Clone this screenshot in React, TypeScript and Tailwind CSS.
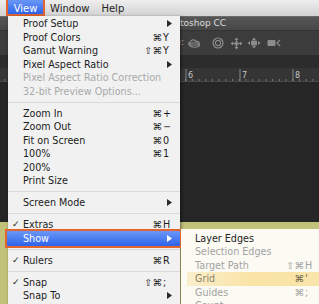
import React from "react";

type Item =
  | {
      label: string;
      disabled?: boolean;
      check?: boolean;
      mods?: string;
      k?: string;
      arrow?: boolean;
      sel?: boolean;
    }
  | "sep";

const items: Item[] = [
  { label: "Proof Setup", arrow: true },
  { label: "Proof Colors", mods: "⌘", k: "Y" },
  { label: "Gamut Warning", mods: "⇧⌘", k: "Y" },
  { label: "Pixel Aspect Ratio", arrow: true },
  { label: "Pixel Aspect Ratio Correction", disabled: true },
  { label: "32-bit Preview Options...", disabled: true },
  "sep",
  { label: "Zoom In", mods: "⌘", k: "+" },
  { label: "Zoom Out", mods: "⌘", k: "−" },
  { label: "Fit on Screen", mods: "⌘", k: "0" },
  { label: "100%", mods: "⌘", k: "1" },
  { label: "200%" },
  { label: "Print Size" },
  "sep",
  { label: "Screen Mode", arrow: true },
  "sep",
  { label: "Extras", check: true, mods: "⌘", k: "H" },
  { label: "Show", arrow: true, sel: true },
  "sep",
  { label: "Rulers", check: true, mods: "⌘", k: "R" },
  "sep",
  { label: "Snap", check: true, mods: "⇧⌘", k: ";" },
  { label: "Snap To", arrow: true },
];

function Arrow({ color }: { color: string }) {
  return (
    <svg width="5" height="7" viewBox="0 0 5 7" className="absolute right-[8px] top-[3px]">
      <path d="M0 0 L5 3.5 L0 7 Z" fill={color} />
    </svg>
  );
}

function MenuRow({ it }: { it: Exclude<Item, "sep"> }) {
  const textColor = it.sel ? "text-white" : it.disabled ? "text-[#a9a9a9]" : "text-[#1c1c1c]";
  return (
    <div className={`relative h-[13.5px] flex items-center pl-[15px] ${textColor}`}>
      {it.sel && (
        <div className="absolute left-[-3px] right-[-2px] top-[-3px] bottom-[-3px] border-[2px] border-[#e2652f] bg-gradient-to-b from-[#6a97f6] to-[#2e62ea]" />
      )}
      {it.check && <span className="absolute left-[4px] top-0 leading-[13.5px] text-[9px]">✓</span>}
      <span className="relative leading-[13.5px] whitespace-nowrap">{it.label}</span>
      {it.k && (
        <span className="absolute right-[10px] top-0 flex leading-[13.5px]">
          <span className="text-right">{it.mods}</span>
          <span className="w-[8px] pl-[1px]">{it.k}</span>
        </span>
      )}
      {it.arrow && <Arrow color={it.sel ? "#ffffff" : "#2a2a2a"} />}
    </div>
  );
}

function Ruler() {
  const ticks: React.ReactNode[] = [];
  const majors = [186, 240, 293];
  for (let x = -2; x < 319; x += 6.7) {
    ticks.push(<line key={x} x1={x} x2={x} y1={11} y2={14} stroke="#8a8a8a" strokeWidth="0.8" />);
  }
  return (
    <svg width="319" height="14" className="block">
      <rect width="319" height="14" fill="#353535" />
      {ticks}
      {majors.map((x) => (
        <line key={"m" + x} x1={x} x2={x} y1={1} y2={14} stroke="#9a9a9a" strokeWidth="0.8" />
      ))}
      <text x="188" y="10" fill="#c8c8c8" fontSize="8" fontFamily="DejaVu Sans">6</text>
      <text x="242" y="10" fill="#c8c8c8" fontSize="8" fontFamily="DejaVu Sans">7</text>
      <text x="295" y="10" fill="#c8c8c8" fontSize="8" fontFamily="DejaVu Sans">8</text>
      <line x1="0" x2="319" y1="13.5" y2="13.5" stroke="#4a4a4a" />
    </svg>
  );
}

function Icon3DRotate() {
  return (
    <svg width="16" height="12" viewBox="0 0 16 12">
      <path d="M3 8 C1 8 1 5 3.5 5 C4 2.5 8 2 9 4.5 C11.5 4 13 6 12 8 Z" fill="none" stroke="#8c8c8c" strokeWidth="1.2" />
      <ellipse cx="7.5" cy="8" rx="5" ry="2.2" fill="none" stroke="#8c8c8c" strokeWidth="1.1" />
    </svg>
  );
}
function IconRoll() {
  return (
    <svg width="12" height="12" viewBox="0 0 12 12">
      <circle cx="6" cy="6" r="5" fill="none" stroke="#8c8c8c" strokeWidth="1.2" />
      <circle cx="6" cy="6" r="2.6" fill="none" stroke="#8c8c8c" strokeWidth="1.2" />
    </svg>
  );
}
function IconDrag() {
  return (
    <svg width="13" height="13" viewBox="0 0 13 13">
      <path d="M6.5 0.5 L8.5 3 L4.5 3 Z M6.5 12.5 L8.5 10 L4.5 10 Z M0.5 6.5 L3 4.5 L3 8.5 Z M12.5 6.5 L10 4.5 L10 8.5 Z" fill="#8c8c8c" />
      <path d="M6.5 3 V10 M3 6.5 H10" stroke="#8c8c8c" strokeWidth="1.1" />
      <circle cx="6.5" cy="6.5" r="1.8" fill="none" stroke="#8c8c8c" strokeWidth="1" />
    </svg>
  );
}
function IconSlide() {
  return (
    <svg width="14" height="12" viewBox="0 0 14 12">
      <path d="M7 0.5 L9 3 L5 3 Z M7 11.5 L9 9 L5 9 Z M0.5 6 L3 4 L3 8 Z M13.5 6 L11 4 L11 8 Z" fill="#8c8c8c" />
      <rect x="4" y="3.5" width="6" height="5" rx="1" fill="#8c8c8c" />
    </svg>
  );
}
function IconCamera() {
  return (
    <svg width="14" height="10" viewBox="0 0 14 10">
      <rect x="0.5" y="2" width="8" height="6" rx="1" fill="#8c8c8c" />
      <path d="M13 2 L10 5 L13 8" fill="none" stroke="#8c8c8c" strokeWidth="1.2" />
    </svg>
  );
}

export default function App() {
  return (
    <div className="relative w-[319px] h-[304px] overflow-hidden bg-[#262626] font-['DejaVu_Sans',sans-serif] text-[9.6px]">
      {/* mac menu bar */}
      <div className="h-[16px] flex items-stretch bg-gradient-to-b from-[#eeeeee] to-[#d2d2d2] text-[#1e1e1e] text-[10px]">
        <div className="w-[6px]" />
        <div className="relative w-[39px] flex items-center justify-center">
          <div className="absolute inset-0 top-[-2px] border-[2px] border-[#e2652f] bg-gradient-to-b from-[#6a97f6] to-[#2e62ea]" />
          <span className="relative text-white">View</span>
        </div>
        <div className="ml-[5px] flex items-center">Window</div>
        <div className="ml-[12px] flex items-center">Help</div>
      </div>

      {/* photoshop window */}
      <div className="flex flex-col h-[288px]">
        <div className="h-[14px] bg-gradient-to-b from-[#565656] to-[#474747] border-t border-[#6a6a6a] flex items-center">
          <span className="pl-[132px] text-[#dedede] text-[9px] leading-none whitespace-nowrap">Adobe Photoshop CC</span>
        </div>
        <div className="h-[25px] bg-[#3c3c3c] border-t border-[#333] flex items-center">
          <div className="w-[184px] text-right text-[#b4b4b4] text-[9px]">3D Mode:</div>
          <div className="ml-[3px] flex items-center"><Icon3DRotate /></div>
          <div className="ml-[9px] flex items-center"><IconRoll /></div>
          <div className="ml-[6px] flex items-center"><IconDrag /></div>
          <div className="ml-[4px] flex items-center"><IconSlide /></div>
          <div className="ml-[6px] flex items-center"><IconCamera /></div>
        </div>
        <div className="h-[13px] bg-[#2c2c2c]" />
        <Ruler />
        <div className="h-[140px] bg-[#262626]" />
        <div className="flex-1 bg-[#c3c27b]" />
      </div>

      {/* view menu */}
      <div className="absolute left-[8px] top-[16px] w-[172px] h-[290px] bg-[#f1f1f1] pt-[1px] shadow-[1px_1px_3px_rgba(0,0,0,0.5)]">
        {items.map((it, i) =>
          it === "sep" ? (
            <div key={i} className="h-[8.6px] flex items-center">
              <div className="w-full h-px bg-[#d9d9d9]" />
            </div>
          ) : (
            <MenuRow key={i} it={it} />
          )
        )}
      </div>

      {/* show submenu */}
      <div className="absolute left-[181px] top-[229px] right-0 bottom-0 bg-[#fbfaf3] pt-[2.5px]">
        <SubRow label="Layer Edges" color="text-[#1e1e1e]" />
        <SubRow label="Selection Edges" color="text-[#a3a3a3]" />
        <SubRow label="Target Path" color="text-[#a3a3a3]" mods="⇧⌘" k="H" />
        <SubRow label="Grid" color="text-[#8d826a]" mods="⌘" k="'" hl />
        <SubRow label="Guides" color="text-[#a3a3a3]" mods="⌘" k=";" />
        <SubRow label="Count" color="text-[#a3a3a3]" />
      </div>
    </div>
  );
}

function SubRow({
  label,
  color,
  mods,
  k,
  hl,
}: {
  label: string;
  color: string;
  mods?: string;
  k?: string;
  hl?: boolean;
}) {
  return (
    <div className={`relative h-[13.5px] flex items-center pl-[14px] ${color}`}>
      {hl && <div className="absolute left-[6px] right-0 top-[-0.5px] bottom-[-0.5px] bg-gradient-to-r from-[#fbeecb] via-[#f9e3a5] to-[#f9e4aa]" />}
      <span className="relative leading-[13.5px] whitespace-nowrap">{label}</span>
      {k && (
        <span className={`absolute right-[7px] top-0 flex leading-[13.5px] ${hl ? "text-[#6b5f48]" : "text-[#a3a3a3]"}`}>
          <span>{mods}</span>
          <span className="w-[8px] pl-[1px]">{k}</span>
        </span>
      )}
    </div>
  );
}
